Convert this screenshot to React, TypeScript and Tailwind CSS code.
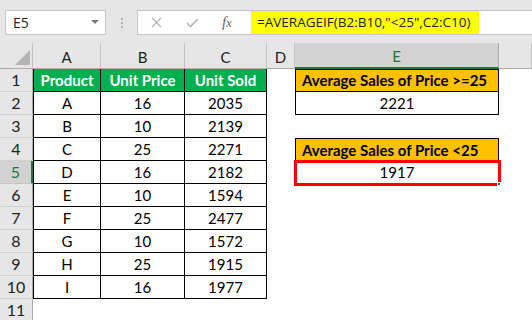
import React from 'react';

const rows = [
  ['A', '16', '2035'],
  ['B', '10', '2139'],
  ['C', '25', '2271'],
  ['D', '16', '2182'],
  ['E', '10', '1594'],
  ['F', '25', '2477'],
  ['G', '10', '1572'],
  ['H', '25', '1915'],
  ['I', '16', '1977'],
];

const cols = ['A', 'B', 'C', 'D', 'E', ''];

function ColHeader({ label }: { label: string }) {
  const active = label === 'E';
  return (
    <div
      className={
        active
          ? 'flex items-center justify-center pt-[3px] bg-[#d2d2d2] border-r border-[#ababab] border-b-2 border-b-[#217346] text-[#217346]'
          : 'flex items-center justify-center pt-[3px] bg-[#e6e6e6] border-r border-[#c4c4c4] border-b border-b-[#ababab] text-[#222]'
      }
    >
      {label}
    </div>
  );
}

function RowHeader({ n }: { n: number }) {
  const active = n === 5;
  return (
    <div
      className={
        active
          ? 'flex items-center justify-center text-[16px] bg-[#d2d2d2] border-b border-[#c4c4c4] border-r-2 border-r-[#217346] text-[#217346]'
          : 'flex items-center justify-center text-[16px] bg-[#e6e6e6] border-b border-[#d0d0d0] border-r border-r-[#ababab] text-[#222]'
      }
    >
      {n}
    </div>
  );
}

function TableCell({ children, col, head }: { children: React.ReactNode; col: number; head?: boolean }) {
  return (
    <div
      className={
        'flex items-center justify-center border-r border-b border-black ' +
        (col === 0 ? 'border-l ' : '') +
        (head ? 'bg-[#00b050] text-white font-bold' : 'bg-white text-black')
      }
    >
      {children}
    </div>
  );
}

function ECell({ row }: { row: number }) {
  if (row === 1)
    return (
      <div className="flex items-center pl-[6px] bg-[#ffc000] border border-black font-bold text-black whitespace-nowrap">
        Average Sales of Price &gt;=25
      </div>
    );
  if (row === 2)
    return (
      <div className="flex items-center justify-center bg-white border-x border-b border-black">2221</div>
    );
  if (row === 4)
    return (
      <div className="flex items-center pl-[6px] bg-[#ffc000] border-x border-t border-black font-bold text-black whitespace-nowrap">
        Average Sales of Price &lt;25
      </div>
    );
  if (row === 5)
    return (
      <div className="relative flex items-center justify-center bg-white">
        1917
        <div className="absolute -top-px -left-px -right-[2px] -bottom-[2px] border-[3px] border-[#ff0000]" />
        <div className="absolute -right-[2px] -bottom-[2px] w-[4px] h-[4px] bg-[#217346] border border-white" />
      </div>
    );
  return <div className="bg-white" />;
}

export default function App() {
  return (
    <div className="w-[532px] h-[320px] overflow-hidden bg-white font-['Lato',sans-serif] text-[15px]">
      {/* formula bar */}
      <div className="h-[43px] bg-[#e6e6e6] flex items-start pt-[10px] font-['Open_Sans',sans-serif]">
        <div className="ml-[5px] w-[101px] h-[25px] bg-white border border-[#c6c6c6] flex items-center justify-between pl-[7px] pr-[6px] text-[14px] text-[#222]">
          <span>E5</span>
          <svg width="8" height="5" viewBox="0 0 8 5">
            <path d="M0 0H8L4 4Z" fill="#7a7a7a" />
          </svg>
        </div>
        <div className="w-[31px] h-[25px] flex flex-col items-center justify-center gap-[2px]">
          <span className="w-[2px] h-[2px] bg-[#b0b0b0]" />
          <span className="w-[2px] h-[2px] bg-[#b0b0b0]" />
          <span className="w-[2px] h-[2px] bg-[#b0b0b0]" />
        </div>
        <div className="flex-1 h-[25px] bg-white border border-[#c6c6c6] border-r-0 flex items-stretch">
          <div className="w-[109px] flex items-center">
            <svg className="ml-[13px]" width="11" height="11" viewBox="0 0 11 11">
              <path d="M1 1L10 10M10 1L1 10" stroke="#b4b4b4" strokeWidth="1.3" />
            </svg>
            <svg className="ml-[24px]" width="13" height="10" viewBox="0 0 13 10">
              <path d="M1 5L4.5 8.5L12 1" stroke="#b4b4b4" strokeWidth="1.6" fill="none" />
            </svg>
            <span className="ml-[23px] font-['Liberation_Serif',serif] italic text-[15px] text-[#666] leading-none">
              f<span className="text-[12px]">x</span>
            </span>
          </div>
          <div className="ml-[4px] w-[228px] bg-[#ffff00] flex items-center pl-[6px] text-[13.5px] text-[#222] whitespace-nowrap">
            =AVERAGEIF(B2:B10,"&lt;25",C2:C10)
          </div>
        </div>
      </div>

      {/* sheet */}
      <div className="grid grid-cols-[33px_68px_84px_82px_28px_204px_1fr] grid-rows-[26px_repeat(11,23px)]">
        <div className="relative bg-[#e6e6e6] border-r border-[#c4c4c4] border-b border-b-[#ababab]">
          <svg className="absolute left-[15px] top-[7px]" width="15" height="15" viewBox="0 0 15 15">
            <path d="M15 0V15H0Z" fill="#b4b4b4" />
          </svg>
        </div>
        {cols.map((c, i) => (
          <ColHeader key={i} label={c} />
        ))}

        {/* row 1 */}
        <RowHeader n={1} />
        <TableCell col={0} head>Product</TableCell>
        <TableCell col={1} head>Unit Price</TableCell>
        <TableCell col={2} head>Unit Sold</TableCell>
        <div className="bg-white" />
        <ECell row={1} />
        <div className="bg-white" />

        {rows.map((r, i) => {
          const n = i + 2;
          return (
            <React.Fragment key={n}>
              <RowHeader n={n} />
              {r.map((v, j) => (
                <TableCell key={j} col={j}>
                  {v}
                </TableCell>
              ))}
              <div className="bg-white" />
              <ECell row={n} />
              <div className="bg-white" />
            </React.Fragment>
          );
        })}

        <RowHeader n={11} />
        <div className="col-span-6 bg-white" />
      </div>
    </div>
  );
}
